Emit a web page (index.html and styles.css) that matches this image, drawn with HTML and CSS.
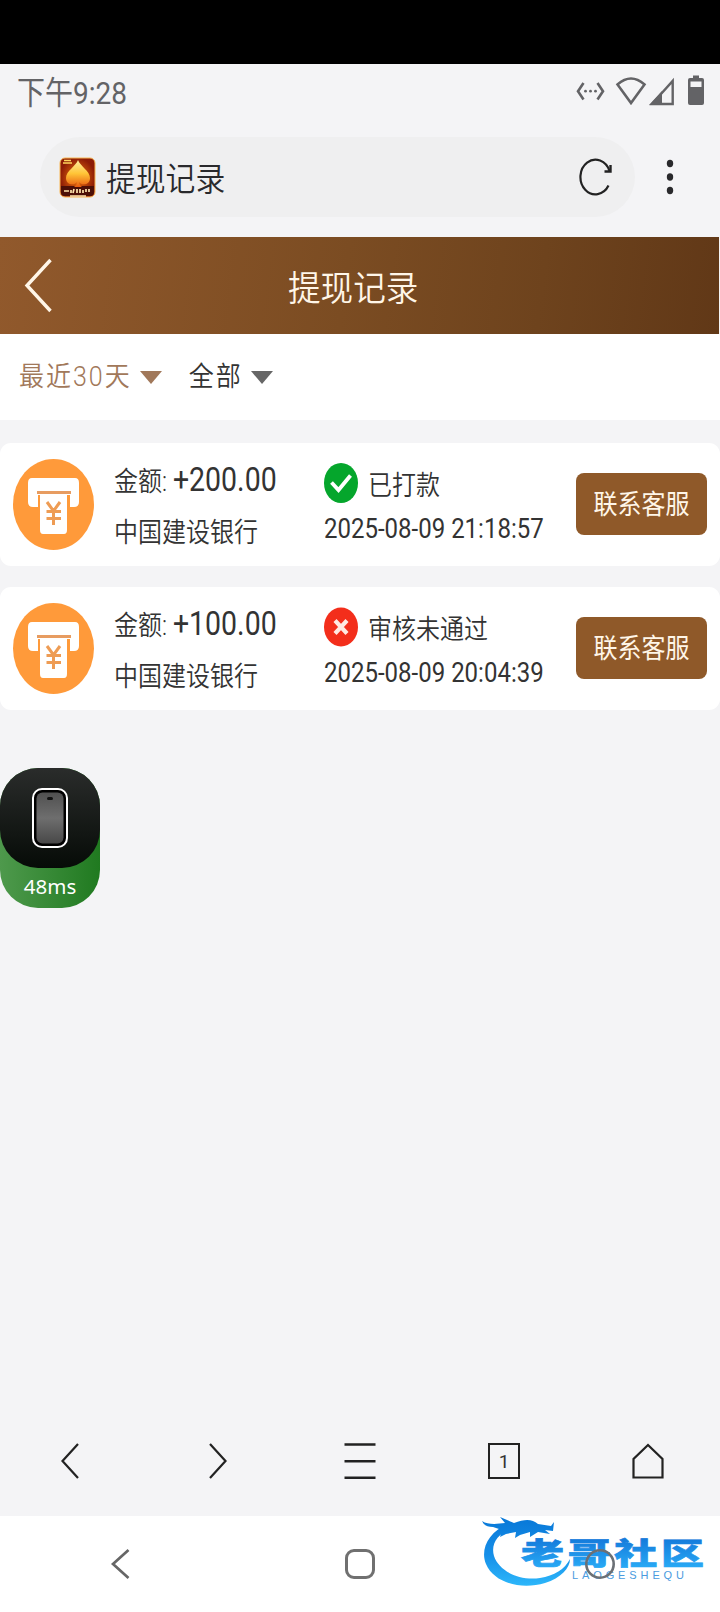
FILE: index.html
```html
<!DOCTYPE html>
<html lang="zh-CN">
<head>
<meta charset="utf-8">
<title>提现记录</title>
<link rel="stylesheet" href="styles.css">
</head>
<body>
<svg class="defs" width="0" height="0">
  <symbol id="atm" viewBox="0 0 81 91" preserveAspectRatio="none">
    <ellipse cx="40.500" cy="45.500" rx="40.500" ry="45.500" fill="#ff9a3a"/>
    <path d="M19 19H62Q66 19 66 24V43Q66 48 61 48H57V36H25V48H20Q15 48 15 43V24Q15 19 19 19Z" fill="#fff"/>
    <path d="M24 33.500H58" stroke="#e79c61" stroke-width="3"/>
    <path d="M27 35H54V71Q54 75 51 75H30Q27 75 27 71Z" fill="#fff"/>
    <path d="M34 43L40.500 52L47 43M33.500 52.500H48M33.500 59.500H48M40.500 52V66" fill="none" stroke="#ee9c54" stroke-width="3"/>
  </symbol>
</svg>
<div class="screen">
  <div class="notch"></div>
  <header class="status">
    <span class="t clock">下午9:28</span>
    <svg class="status-icons" width="130" height="32" viewBox="574 74 130 32">
      <g fill="none" stroke="#636366">
        <path d="M583.500 83L578 91.200L583.500 99.500M597.500 83L603 91.200L597.500 99.500" stroke-width="2.600"/>
        <path d="M617.500 84.500Q631 72.500 644.500 84.500L631 103Z" stroke-width="2.600"/>
        <path d="M652 104L672.700 81V104Z" stroke-width="2.400"/>
      </g>
      <g fill="#636366">
        <circle cx="585.500" cy="91.200" r="1.400"/><circle cx="590.500" cy="91.200" r="1.400"/><circle cx="595.500" cy="91.200" r="1.400"/>
        <path d="M649 105L662 91V105Z"/>
        <path d="M693 78V75.500H699V78H702Q704 78 704 80V103Q704 105 702 105H690Q688 105 688 103V80Q688 78 690 78ZM690.500 81.500V87H701.500V81.500Z" fill-rule="evenodd"/>
      </g>
    </svg>
  </header>
  <div class="address">
    <div class="pill">
      <svg class="favicon" width="37" height="41" viewBox="0 0 37 41">
        <defs>
          <radialGradient id="glow"><stop offset="0" stop-color="#f47a0c"/><stop offset="1" stop-color="#8d1c06"/></radialGradient>
          <linearGradient id="spade" x2="0" y2="1"><stop offset="0" stop-color="#fff0a0"/><stop offset=".5" stop-color="#ffc437"/><stop offset="1" stop-color="#e85b0e"/></linearGradient>
        </defs>
        <rect x="1" y="1" width="35" height="39" rx="5" fill="url(#glow)" stroke="#f8b653"/>
        <path d="M2 29H35V35Q35 39 31 39H6Q2 39 2 35Z" fill="#4c0f07"/>
        <path d="M19 3C21 9 31 14 31 21C31 28 23 29 20 25Q20 28 23 30H15Q18 28 18 25C15 29 7 28 7 21C7 14 17 9 19 3Z" fill="url(#spade)"/>
        <path d="M4 6H13M5 3.500H12" stroke="#ffd55c" stroke-width="1.500"/>
        <path d="M5 34H10M12 33V36M15 32L14 36M18 32V36M21 32V36M24 33V36M27 32V35M30 32V35M11 39H27" stroke="#ffe5ae" stroke-width="1.700"/>
      </svg>
      <span class="t page-name">提现记录</span>
      <svg class="reload" width="34" height="40" viewBox="0 0 34 40">
        <path d="M29.500 28.500A15 17.300 0 1 1 30.500 14" fill="none" stroke="#222" stroke-width="2.200"/>
        <path d="M31.500 8V14.500H25.500" fill="none" stroke="#222" stroke-width="2.400"/>
      </svg>
    </div>
    <svg class="more" width="8" height="36" viewBox="0 0 8 36"><g fill="#29292c"><ellipse cx="4" cy="4.500" rx="3.200" ry="3.700"/><ellipse cx="4" cy="18" rx="3.200" ry="3.700"/><ellipse cx="4" cy="31.500" rx="3.200" ry="3.700"/></g></svg>
  </div>
  <div class="titlebar">
    <svg class="back" width="30" height="56" viewBox="0 0 30 56"><path d="M26.500 2L3 27.500L26.500 53" fill="none" stroke="#fff6e8" stroke-width="3.400"/></svg>
    <h1 class="t title">提现记录</h1>
  </div>
  <div class="filters">
    <span class="filter active"><span class="t">最近30天</span><i class="caret"></i></span>
    <span class="filter"><span class="t">全部</span><i class="caret"></i></span>
  </div>
  <main class="records">
    <article class="card">
      <svg class="card-icon" width="81" height="91"><use href="#atm"/></svg>
      <div class="money">
        <div class="line"><span class="t">金额: <b class="sum">+200.00</b></span></div>
        <div class="line"><span class="t">中国建设银行</span></div>
      </div>
      <div class="state">
        <div class="line">
          <svg class="mark" width="34" height="40" viewBox="0 0 34 40"><ellipse cx="17" cy="20" rx="17" ry="20" fill="#05a62c"/><path d="M7.500 19.500L14.500 27L26.500 12.500" fill="none" stroke="#fff" stroke-width="3.800"/></svg>
          <span class="t status-text">已打款</span>
        </div>
        <div class="line"><span class="t date">2025-08-09 21:18:57</span></div>
      </div>
      <button class="contact"><span class="t">联系客服</span></button>
    </article>
    <article class="card">
      <svg class="card-icon" width="81" height="91"><use href="#atm"/></svg>
      <div class="money">
        <div class="line"><span class="t">金额: <b class="sum">+100.00</b></span></div>
        <div class="line"><span class="t">中国建设银行</span></div>
      </div>
      <div class="state">
        <div class="line">
          <svg class="mark" width="34" height="40" viewBox="0 0 34 40"><ellipse cx="17" cy="20" rx="17" ry="19.500" fill="#f32e1b"/><path d="M11 13.500L23 26.500M23 13.500L11 26.500" fill="none" stroke="#ffe9e2" stroke-width="4.200"/></svg>
          <span class="t status-text">审核未通过</span>
        </div>
        <div class="line"><span class="t date">2025-08-09 20:04:39</span></div>
      </div>
      <button class="contact"><span class="t">联系客服</span></button>
    </article>
  </main>
  <nav class="toolbar">
    <span class="cell"><svg class="nudge-l" width="20" height="38" viewBox="0 0 20 38"><path d="M18 2L2.500 19L18 36" fill="none" stroke="#222" stroke-width="2.200"/></svg></span>
    <span class="cell"><svg class="nudge-r" width="20" height="38" viewBox="0 0 20 38"><path d="M2 2L17.500 19L2 36" fill="none" stroke="#222" stroke-width="2.200"/></svg></span>
    <span class="cell"><svg width="32" height="38" viewBox="0 0 32 38"><path d="M.500 2.500H31.500M.500 19.300H31.500M.500 35.800H31.500" stroke="#222" stroke-width="2.400"/></svg></span>
    <span class="cell"><span class="tabs"><span class="t tab-count">1</span></span></span>
    <span class="cell"><svg width="32" height="38" viewBox="0 0 32 38"><path d="M1.500 35.500V17L16 3L30.500 17V35.500Z" fill="none" stroke="#222" stroke-width="2.200"/></svg></span>
  </nav>
  <nav class="system">
    <span class="cell"><svg width="20" height="32" viewBox="0 0 20 32"><path d="M18.500 2L3 16L18.500 30" fill="none" stroke="#666" stroke-width="2.700"/></svg></span>
    <span class="cell"><i class="recent"></i></span>
    <span class="cell"></span>
  </nav>

  <div class="latency">
    <div class="device">
      <svg width="38" height="62" viewBox="0 0 38 62">
        <defs><linearGradient id="glass" x2="0" y2="1"><stop offset="0" stop-color="#505050"/><stop offset=".5" stop-color="#6e6e6e"/><stop offset="1" stop-color="#484848"/></linearGradient></defs>
        <rect x="2" y="2" width="34" height="58" rx="9" fill="#000" stroke="#fff" stroke-width="2"/>
        <rect x="5.500" y="5.500" width="27" height="51" rx="6" fill="url(#glass)"/>
        <rect x="16" y="10" width="6" height="3" rx="1.500" fill="#111"/>
      </svg>
    </div>
    <span class="ping">48ms</span>
  </div>

  <svg class="watermark" width="240" height="80" viewBox="476 1512 240 80">
    <defs><linearGradient id="blue" gradientUnits="userSpaceOnUse" x1="0" y1="1518" x2="0" y2="1585"><stop offset="0" stop-color="#0878d8"/><stop offset=".55" stop-color="#168fe8"/><stop offset="1" stop-color="#2cb6fa"/></linearGradient>
    <linearGradient id="word" x2="0" y2="1"><stop offset=".2" stop-color="#1479da"/><stop offset="1" stop-color="#2cb2fa"/></linearGradient></defs>
    <g fill="url(#blue)">
      <path d="M508 1524C488 1532 480 1550 486 1564C494 1583 521 1590 545 1583C561 1578 570 1568 570 1559C565 1569 554 1576 540 1578C519 1581 499 1571 494 1556C490 1542 500 1531 517 1527Z"/>
      <path d="M482 1521C488 1525 497 1524 505 1523L500 1517L514 1523C525 1519 532 1519 538 1524L551 1526L554 1522L553 1531L545 1530L550 1534L538 1532L530 1537L530 1532L520 1535L515 1538L516 1532L506 1534L500 1537L502 1530L493 1527Q484 1527 482 1521Z"/>
    </g>
    <g transform="translate(521 1564) scale(1 .7)"><text class="brand" textLength="183">老哥社区</text></g>
    <text class="latin" x="572" y="1579" textLength="112">LAOGESHEQU</text>
    <circle cx="600" cy="1564" r="13.700" fill="none" stroke="#6b7075" stroke-width="2.600"/>
  </svg>
</div>
</body>
</html>
```
FILE: styles.css
```css
* { box-sizing: border-box; }
body {
  margin: 0;
  background: #f4f4f6;
  font-family: Roboto, "Noto Sans CJK SC", sans-serif;
  color: #333;
}
svg { display: block; flex: none; }
.defs { position: absolute; }
.screen {
  position: relative;
  width: 720px;
  height: 1612px;
  overflow: hidden;
  display: flex;
  flex-direction: column;
}
/* Text is drawn slightly taller than wide across the whole display. */
.t {
  display: inline-block;
  transform: translateY(2px) scaleY(1.14);
  white-space: nowrap;
  line-height: 40px;
  font-weight: 350;
}
.notch { height: 64px; background: #000; }
.status {
  height: 58px;
  padding: 0 16px 0 17px;
  display: flex;
  align-items: center;
  justify-content: space-between;
}
.clock {
  font-size: 28px;
  color: #636366;
  font-weight: 400;
  transform: translateY(1px) scaleY(1.12);
}
.status-icons { margin-bottom: 6px; }
.address {
  height: 114.5px;
  padding: 15px 46px 0 40px;
  display: flex;
  justify-content: space-between;
}
.pill {
  width: 595px;
  height: 80px;
  border-radius: 40px;
  background: #efeff0;
  padding: 0 22px 0 19px;
  display: flex;
  align-items: center;
}
.page-name {
  font-size: 29.8px;
  margin-left: 10px;
  color: #29292c;
  transform: translateY(3px) scaleY(1.1);
}
.reload { margin-left: auto; }
.more { margin-top: 22px; }
.titlebar {
  height: 97.5px;
  width: 719px;
  background: linear-gradient(97deg, #91592c 0%, #7b4c22 48%, #6e431d 75%, #613817 100%);
  display: flex;
  align-items: flex-start;
}
.back { margin: 21px 0 0 24px; }
.title { margin: 31px 0 0 234px; font-size: 32.6px; color: #fff6e8; transform: translateY(1.5px) scaleY(1.08); }
.filters {
  height: 86px;
  background: #fff;
  padding: 0 0 3px 19px;
  display: flex;
  align-items: center;
  gap: 27px;
}
.filter {
  display: flex;
  align-items: center;
  font-size: 25px;
  letter-spacing: 2px;
}
.filter .t { transform: translateY(1px) scaleY(1.1); }
.caret {
  margin: 3px 0 0 8px;
  border: 11px solid transparent;
  border-top: 13px solid #666;
  border-bottom: 0;
}
.active { color: #a1785a; }
.active .caret { border-top-color: #a1785a; }
.records {
  padding-top: 23.400px;
  display: flex;
  flex-direction: column;
  gap: 21.6px;
}
.card {
  height: 122.4px;
  padding: 0 13px;
  background: #fff;
  border-radius: 11px;
  display: flex;
  align-items: flex-start;
  font-size: 24px;
}
.card-icon { margin: 15.500px 20px 0 0; }
.money { width: 210px; padding-top: 16px; }
.money .line + .line { margin-top: 12px; }
.line { height: 40px; display: flex; align-items: center; }
.sum { font-size: 28.5px; font-weight: 400; }
.state { flex: 1; padding-top: 19.5px; }
.state .line + .line { margin-top: 5px; }
.status-text { margin-left: 10px; transform: translateY(3px) scaleY(1.12); }
.date { font-weight: 400; transform: translateY(1.5px) scaleY(1.12); }
.contact {
  width: 131px;
  height: 62px;
  margin: 29.8px 0 0;
  padding: 0 0 3px;
  border: 0;
  border-radius: 8px;
  background: #8f5929;
  color: #fff6e8;
  font: inherit;
  display: flex;
  align-items: center;
  justify-content: center;
}
.contact .t { font-weight: 400; }
.toolbar {
  margin-top: auto;
  height: 110px;
  display: grid;
  grid-template-columns: repeat(5, 1fr);
}
.cell { display: flex; align-items: center; justify-content: center; }
.nudge-l { margin-right: 4px; }
.nudge-r { margin-left: 4px; }
.tabs {
  width: 32px;
  height: 36px;
  border: 2px solid #222;
  display: flex;
  align-items: center;
  justify-content: center;
}
.tab-count { font-size: 19px; font-weight: 400; transform: translateY(1px); }
.system {
  height: 96px;
  background: #fff;
  display: grid;
  grid-template-columns: repeat(3, 1fr);
}
.recent { width: 30px; height: 30px; border: 3px solid #707070; border-radius: 9px; }
.latency {
  position: absolute;
  left: 0;
  top: 768px;
  width: 100px;
  height: 140px;
  border-radius: 38px;
  background: linear-gradient(90deg, #4e994c, #207a20);
  text-align: center;
}
.device {
  height: 100px;
  border-radius: 38px;
  background: linear-gradient(#2a2c2b, #060b07);
  display: flex;
  align-items: center;
  justify-content: center;
}
.ping { display: block; font: 20.5px/36px "Noto Sans", sans-serif; color: #fff; }
.watermark { position: absolute; left: 476px; top: 1512px; }
.brand { font: 900 43px "Noto Sans CJK SC", sans-serif; fill: url(#word); stroke: url(#word); stroke-width: 1px; }
.latin { font: 400 11px "Liberation Sans", sans-serif; fill: #4a9be0; }
```
